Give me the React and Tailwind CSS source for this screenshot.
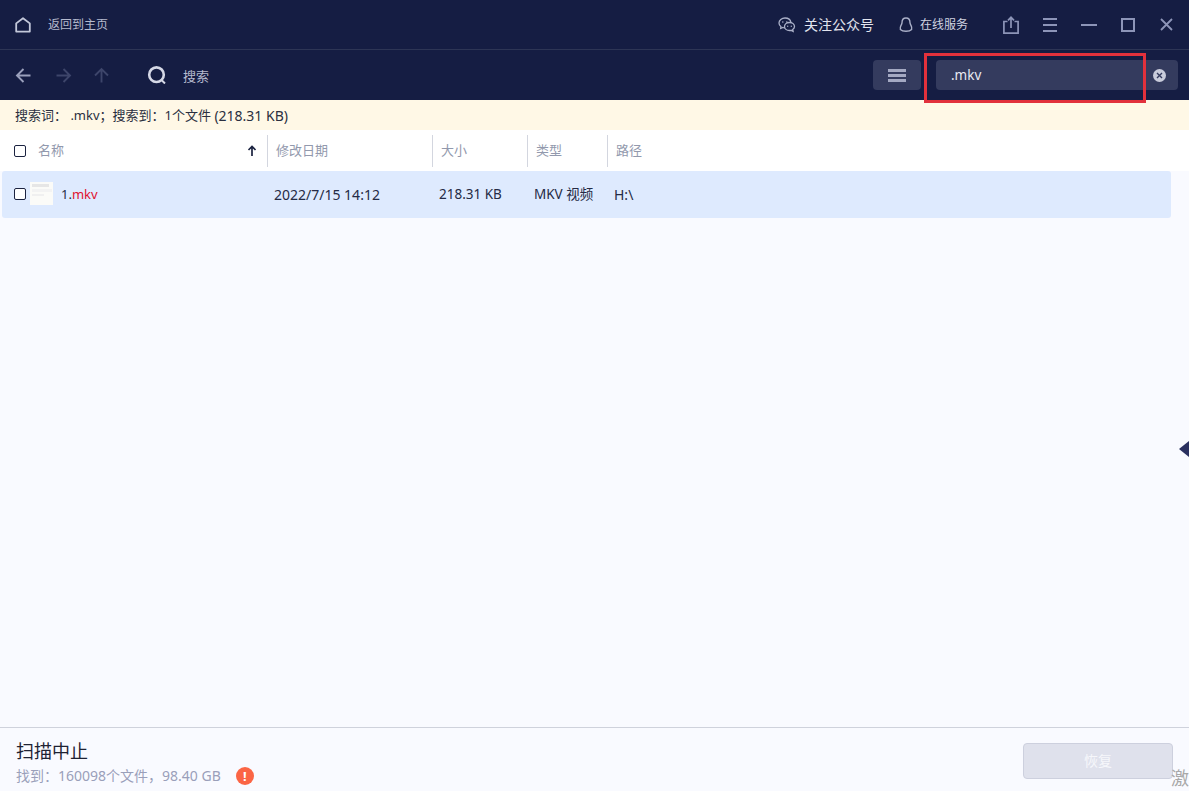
const font = { fontFamily: '"Noto Sans", "Noto Sans CJK SC", sans-serif' }

function HomeIcon() {
  return (
    <svg width="16" height="16" viewBox="0 0 16 16" fill="none" stroke="#c3c8da" strokeWidth="1.8" strokeLinejoin="round">
      <path d="M1.2 14.6V6.4L8 1.2l6.8 5.2v8.2z" />
    </svg>
  )
}

function WechatIcon() {
  return (
    <svg width="18" height="16" viewBox="0 0 18 16" fill="none" stroke="#aab0c8" strokeWidth="1.3">
      <path d="M7 1C3.700 1 1 3.200 1 6c0 1.500.8 2.800 2 3.700L2.700 11.500l2.200-1c.6.2 1.300.3 2.100.3" />
      <path d="M7 1c3 0 5.500 1.800 5.900 4.300" />
      <path d="M11.500 5.500c-3 0-5 1.800-5 4s2 4 5 4c.6 0 1.100-.1 1.600-.2l2 1-.4-1.800c1.100-.7 1.800-1.800 1.800-3 0-2.200-2-4-5-4z" />
      <circle cx="4.800" cy="5" r=".8" fill="#aab0c8" stroke="none" />
      <circle cx="8.800" cy="5" r=".8" fill="#aab0c8" stroke="none" />
      <circle cx="9.700" cy="9.300" r=".7" fill="#aab0c8" stroke="none" />
      <circle cx="13.300" cy="9.300" r=".7" fill="#aab0c8" stroke="none" />
    </svg>
  )
}

function PenguinIcon() {
  return (
    <svg width="14" height="16" viewBox="0 0 14 16" fill="none" stroke="#aab0c8" strokeWidth="1.4" strokeLinejoin="round">
      <path d="M7 1C4.300 1 3 3.200 3 5.700c0 1-.4 1.600-1 2.700-.7 1.300-1 2.500-.6 4.100.9 1 2.300 1.800 5.600 1.800s4.700-.8 5.600-1.800c.4-1.600.1-2.800-.6-4.100-.6-1.100-1-1.700-1-2.700C11 3.200 9.700 1 7 1z" />
    </svg>
  )
}

function ShareIcon() {
  return (
    <svg width="16" height="18" viewBox="0 0 16 18" fill="none" stroke="#8d95b8" strokeWidth="1.7">
      <path d="M4.500 5.500H.9v11.600h14.200V5.500h-3.600" />
      <path d="M8 12V1.500M5 4.300l3-3 3 3" />
    </svg>
  )
}

function MenuLines({ color = '#8d95b8', width = 14, weight = 2, gap = 6 }) {
  return (
    <svg width={width} height={gap * 2 + weight} viewBox={`0 0 ${width} ${gap * 2 + weight}`} fill={color}>
      <rect y="0" width={width} height={weight} />
      <rect y={gap} width={width} height={weight} />
      <rect y={gap * 2} width={width} height={weight} />
    </svg>
  )
}

function Arrow({ dir, color }) {
  const paths = {
    left: 'M15.500 8.500H2M8.500 2L2 8.500 8.500 15',
    right: 'M1.500 8.500H15M8.500 2L15 8.500 8.500 15',
    up: 'M8.500 15.500V2M2 8.500L8.500 2 15 8.500',
  }
  return (
    <svg width="17" height="17" viewBox="0 0 17 17" fill="none" stroke={color} strokeWidth="1.9">
      <path d={paths[dir]} />
    </svg>
  )
}

function SearchIcon() {
  return (
    <svg width="20" height="18" viewBox="0 0 20 18" fill="none">
      <circle cx="9.500" cy="8.700" r="7.300" stroke="#d5d8e6" strokeWidth="2.600" />
      <path d="M14 13.500l4 4" stroke="#d5d8e6" strokeWidth="2" />
    </svg>
  )
}

function Check() {
  return <span className="h-[12px] w-[12px] shrink-0 rounded-[2px] border-[1.5px] border-[#1b2340] bg-white" />
}

function HeaderCell({ label, className }) {
  return (
    <div className={`flex h-[32px] items-center border-l border-[#d3d6df] pl-2 text-[13px] text-[#9299ad] ${className}`}>
      {label}
    </div>
  )
}

function Thumb() {
  return (
    <div className="flex h-[23px] w-[23px] shrink-0 flex-col gap-[2px] bg-[#fbfbf8] px-[2px] pt-[2px]">
      <div className="h-[3px] w-[17px] bg-[#e6e6e6]" />
      <div className="h-[3px] w-[20px] bg-[#f3f3f3]" />
      <div className="h-[2px] w-[12px] bg-[#f0f0f0]" />
    </div>
  )
}

export default function App() {
  return (
    <div className="relative flex h-[791px] w-[1189px] flex-col overflow-hidden bg-[#f9faff]" style={font}>
      <header className="flex h-[50px] items-center justify-between border-b border-[#2d3555] bg-[#151d43] pl-[15px] pr-[16px]">
        <div className="flex items-center gap-[17px]">
          <HomeIcon />
          <span className="text-[12px] text-[#b5bace]">返回到主页</span>
        </div>
        <div className="flex items-center">
          <WechatIcon />
          <span className="ml-[8px] text-[14px] text-[#e3e5ee]">关注公众号</span>
          <span className="ml-[25px]"><PenguinIcon /></span>
          <span className="ml-[7px] text-[12px] text-[#d0d3e0]">在线服务</span>
          <span className="ml-[35px]"><ShareIcon /></span>
          <span className="ml-[24px]"><MenuLines /></span>
          <span className="ml-[24px] h-[2px] w-[16px] bg-[#8d95b8]" />
          <span className="ml-[24px] h-[14px] w-[14px] border-2 border-[#8d95b8]" />
          <svg className="ml-[25px]" width="13" height="13" viewBox="0 0 13 13" stroke="#8d95b8" strokeWidth="1.800">
            <path d="M1 1l11 11M12 1L1 12" />
          </svg>
        </div>
      </header>

      <div className="flex h-[50px] items-center bg-[#151d43] pl-[15px] pr-[11px]">
        <Arrow dir="left" color="#9aa0bc" />
        <span className="ml-[23px]"><Arrow dir="right" color="#3d456a" /></span>
        <span className="ml-[21px]"><Arrow dir="up" color="#3d456a" /></span>
        <span className="ml-[37px]"><SearchIcon /></span>
        <span className="ml-[16px] pt-[3px] text-[13px] text-[#b5bace]">搜索</span>
        <div className="ml-auto flex h-[30px] w-[48px] items-center justify-center rounded-[4px] bg-[#343b5e]">
          <MenuLines color="#a4a9c2" width={18} weight={3} gap={5} />
        </div>
        <div className="ml-[15px] flex h-[30px] w-[242px] items-center rounded-[4px] bg-[#343b5e] pl-[15px] pr-[12px]">
          <span className="pt-[1px] text-[13.5px] text-[#e8eaf2]">.mkv</span>
          <span className="ml-auto flex h-[13px] w-[13px] items-center justify-center rounded-full bg-[#c9ccdb]">
            <svg width="7" height="7" viewBox="0 0 7 7" stroke="#343b5e" strokeWidth="1.400">
              <path d="M1 1l5 5M6 1L1 6" />
            </svg>
          </span>
        </div>
      </div>

      <div className="flex h-[30px] items-center whitespace-pre bg-[#fff8e6] pl-[15px] pt-[1px] text-[13px] text-[#2a2f40]">
        搜索词： .mkv；搜索到：1个文件 <span className="text-[14px]">(218.31 KB)</span>
      </div>

      <div className="flex h-[41px] items-center bg-white">
        <div className="flex w-[267px] items-center pl-[14px] pr-[10px]">
          <Check />
          <span className="ml-[12px] text-[13px] text-[#9299ad]">名称</span>
          <svg className="ml-auto" width="10" height="11" viewBox="0 0 10 11" fill="none" stroke="#1b2340" strokeWidth="1.700">
            <path d="M5 11V1.500M1.500 5L5 1.500 8.500 5" />
          </svg>
        </div>
        <HeaderCell label="修改日期" className="w-[165px]" />
        <HeaderCell label="大小" className="w-[95px]" />
        <HeaderCell label="类型" className="w-[80px]" />
        <HeaderCell label="路径" className="flex-1" />
      </div>

      <div className="ml-[2px] flex h-[47px] w-[1169px] items-center rounded-[3px] bg-[#deeafe] text-[14px] text-[#252b45]">
        <div className="flex w-[272px] items-center pl-[12px]">
          <span className="-mt-[1px] flex"><Check /></span>
          <span className="ml-[4px] -mt-[2px]"><Thumb /></span>
          <span className="ml-[8px] text-[13px]">1.<span className="text-[#e01030]">mkv</span></span>
        </div>
        <span className="w-[165px]">2022/7/15 14:12</span>
        <span className="w-[95px] text-[13.5px]">218.31 KB</span>
        <span className="w-[80px] text-[13.5px]">MKV 视频</span>
        <span>H:\</span>
      </div>

      <div className="flex-1" />

      <footer className="flex h-[64px] items-start justify-between border-t border-[#cfd2dc] pl-[16px] pr-[16px]">
        <div className="pt-[11px]">
          <div className="text-[18px] leading-[24px] text-[#1e2233]">扫描中止</div>
          <div className="mt-[3px] flex items-center text-[14px] leading-[20px] text-[#9a9fba]">
            找到：160098个文件，98.40 GB
            <span className="ml-[15px] flex h-[18px] w-[18px] items-center justify-center rounded-full bg-[#fb6545] text-[13px] font-bold leading-none text-white">!</span>
          </div>
        </div>
        <button className="mt-[15px] h-[36px] w-[150px] rounded-[4px] border border-[#cdd0de] bg-[#dfe1ec] pb-[2px] text-[14px] text-[#f6f7fb]">
          恢复
        </button>
      </footer>

      <div className="absolute right-0 top-[441px] h-0 w-0 border-y-[8px] border-r-[10px] border-y-transparent border-r-[#2b3160]" />
      <span className="absolute bottom-[2px] left-[1171px] text-[18px] leading-[22px] text-[#a8a8a8]">激</span>
      <div className="pointer-events-none absolute left-[924px] top-[53px] h-[50px] w-[222px] border-[3px] border-[#e2313c]" />
    </div>
  )
}
